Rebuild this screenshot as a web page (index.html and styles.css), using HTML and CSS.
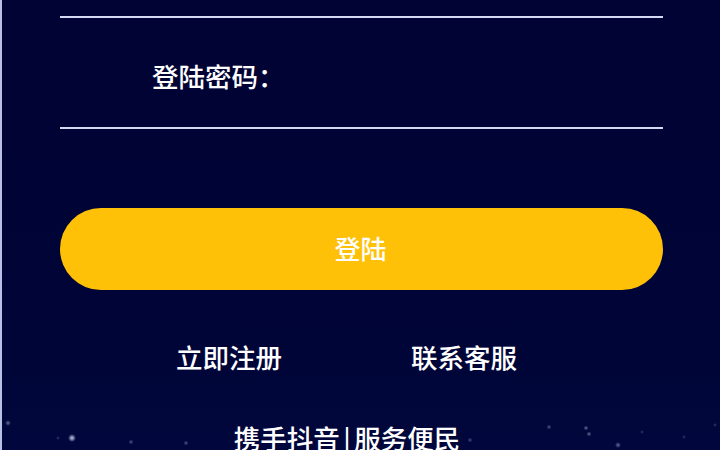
FILE: index.html
```html
<!DOCTYPE html>
<html lang="zh-CN">
<head>
<meta charset="utf-8">
<title>登陆</title>
<link rel="stylesheet" href="styles.css">
</head>
<body>
<main class="page">
  <svg class="stars" viewBox="0 0 720 450" width="720" height="450" aria-hidden="true">
    <defs>
      <radialGradient id="glow">
        <stop offset="0" stop-color="#dfe6ff" stop-opacity=".9"/>
        <stop offset="1" stop-color="#dfe6ff" stop-opacity="0"/>
      </radialGradient>
    </defs>
    <circle cx="72" cy="438" r="4" fill="url(#glow)"/>
    <circle cx="8" cy="423" r="3" fill="url(#glow)" opacity=".5"/>
    <circle cx="131" cy="442" r="2.5" fill="url(#glow)" opacity=".4"/>
    <circle cx="186" cy="443" r="2.5" fill="url(#glow)" opacity=".4"/>
    <circle cx="58" cy="438" r="2" fill="url(#glow)" opacity=".25"/>
    <circle cx="470" cy="440" r="2.5" fill="url(#glow)" opacity=".35"/>
    <circle cx="549" cy="427" r="2.5" fill="url(#glow)" opacity=".4"/>
    <circle cx="586" cy="428" r="2.5" fill="url(#glow)" opacity=".5"/>
    <circle cx="589" cy="434" r="2.5" fill="url(#glow)" opacity=".5"/>
    <circle cx="618" cy="445" r="3" fill="url(#glow)" opacity=".5"/>
    <circle cx="642" cy="432" r="2" fill="url(#glow)" opacity=".25"/>
    <circle cx="684" cy="437" r="2" fill="url(#glow)" opacity=".25"/>
    <circle cx="715" cy="425" r="2" fill="url(#glow)" opacity=".25"/>
  </svg>
  <form class="form">
    <div class="field field-top"></div>
    <div class="field">
      <label class="label">登陆密码：</label>
    </div>
    <button class="submit" type="button">登陆</button>
    <nav class="links">
      <a class="link">立即注册</a>
      <a class="link">联系客服</a>
    </nav>
    <p class="slogan">携手抖音<span class="sep">|</span>服务便民</p>
  </form>
</main>
</body>
</html>
```
FILE: styles.css
```css
* { box-sizing: border-box; }
html, body { margin: 0; padding: 0; height: 100%; background: #000436; overflow: hidden; }
.page {
  position: relative;
  width: 720px;
  height: 450px;
  overflow: hidden;
  border-left: 2px solid #b9c0e6;
  background: linear-gradient(#000333 0, #000436 300px, #01073c 450px);
  font-family: "Noto Sans CJK SC", "Liberation Sans", sans-serif;
  color: #fff;
}
.stars { position: absolute; left: -2px; top: 0; }
.form {
  position: relative;
  display: flex;
  flex-direction: column;
  width: 603px;
  margin-left: 58px;
}
.field {
  display: flex;
  align-items: center;
  height: 111px;
  padding: 6px 0 0 92px;
  border-bottom: 2px solid #d4d8f2;
}
.field-top { height: 18px; padding: 0; }
.label { font-size: 26.5px; line-height: 32px; font-weight: 500; }
.submit {
  height: 82px;
  margin-top: 79px;
  padding: 0 2px 3px 0;
  border: 0;
  border-radius: 41px;
  background: #fec107;
  color: #fff;
  font: 500 26px/34px "Noto Sans CJK SC", sans-serif;
}
.links {
  display: flex;
  justify-content: center;
  gap: 129px;
  margin-top: 49px;
  padding-right: 30px;
}
.link { font-size: 26.5px; line-height: 36px; font-weight: 500; }
.slogan {
  margin: 45px 0 0;
  padding-right: 29px;
  text-align: center;
  font-size: 26.5px;
  line-height: 36px;
  font-weight: 500;
}
.sep { padding: 0 3.5px; }
```
